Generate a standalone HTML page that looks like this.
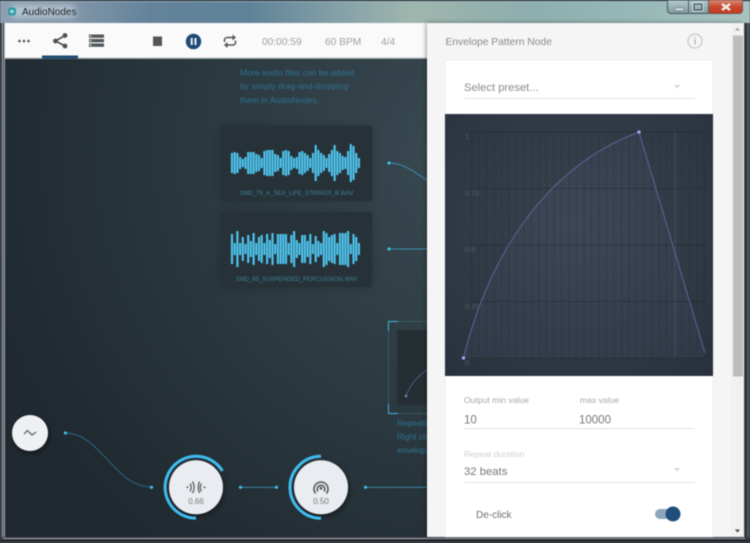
<!DOCTYPE html>
<html>
<head>
<meta charset="utf-8">
<style>
html,body{margin:0;padding:0;width:750px;height:543px;overflow:hidden;background:#2a363d}
svg{display:block;position:absolute;left:0;top:0;filter:blur(.4px)}
text{font-family:"Liberation Sans",sans-serif}
</style>
</head>
<body>
<svg width="750" height="543" viewBox="0 0 750 543" xmlns="http://www.w3.org/2000/svg">
<defs>
<linearGradient id="title" x1="0" x2="1" y1="0" y2="0">
<stop offset="0" stop-color="#8d9fb1"/>
<stop offset=".1" stop-color="#8196a9"/>
<stop offset=".2" stop-color="#64839a"/>
<stop offset=".33" stop-color="#5f8298"/>
<stop offset=".45" stop-color="#84a0a8"/>
<stop offset=".55" stop-color="#9fb6ae"/>
<stop offset=".7" stop-color="#8eaead"/>
<stop offset=".85" stop-color="#97b8b6"/>
<stop offset="1" stop-color="#a9c3c0"/>
</linearGradient>
<radialGradient id="canvas" gradientUnits="userSpaceOnUse" cx="480" cy="150" r="520">
<stop offset="0" stop-color="#3b4b53"/>
<stop offset=".5" stop-color="#2c3a41"/>
<stop offset="1" stop-color="#1f292f"/>
</radialGradient>
<radialGradient id="graph" cx=".5" cy=".42" r=".75">
<stop offset="0" stop-color="#3a4350"/>
<stop offset="1" stop-color="#29323c"/>
</radialGradient>
<linearGradient id="closeb" x1="0" x2="0" y1="0" y2="1">
<stop offset="0" stop-color="#d98a78"/>
<stop offset=".5" stop-color="#c8482f"/>
<stop offset="1" stop-color="#bd3c26"/>
</linearGradient>
<linearGradient id="glassb" x1="0" x2="0" y1="0" y2="1">
<stop offset="0" stop-color="#b4cbcb"/>
<stop offset="1" stop-color="#7f9ca0"/>
</linearGradient>
<filter id="sh" x="-30%" y="-30%" width="160%" height="160%"><feDropShadow dx="1" dy="2" stdDeviation="3" flood-color="#000" flood-opacity=".5"/></filter>
<filter id="sh2" x="-20%" y="-20%" width="140%" height="140%"><feDropShadow dx="0" dy="0" stdDeviation="5" flood-color="#000" flood-opacity=".22"/></filter>
<filter id="pshadow" x="-5%" y="-5%" width="110%" height="110%"><feDropShadow dx="-1" dy="0" stdDeviation="2" flood-color="#000" flood-opacity=".4"/></filter>
<filter id="glow" x="-30%" y="-80%" width="160%" height="260%"><feGaussianBlur stdDeviation="3"/></filter>
<path id="w1" fill="none" d="M232 153v20M234.700 152v22M237.400 153v20M240.100 157v12M242.800 159v8M245.500 157v12M248.200 152v22M250.900 152v22M253.600 152v22M256.300 154v18M259 155v16M261.700 158v10M264.400 151v24M267.100 150v26M269.800 150v26M272.500 150v26M275.200 154v18M277.900 155v16M280.600 158v10M283.300 151v24M286 150v26M288.700 151v24M291.400 156v14M294.100 158v10M296.800 157v12M299.500 152v22M302.200 151v24M304.900 153v20M307.600 155v16M310.300 158v10M313 153v20M315.700 145v36M318.400 150v26M321.100 153v20M323.800 155v16M326.500 158v10M329.200 154v18M331.900 150v26M334.600 145v36M337.300 151v24M340 153v20M342.700 156v14M345.400 157v12M348.100 151v24M350.800 144v38M353.500 146v34M356.200 153v20M358.900 158v10"/>
<path id="w2" fill="none" d="M232 234v30M234.700 243v12M237.400 231v36M240.100 243v12M242.800 237v24M245.500 244v10M248.200 235v28M250.900 241v16M253.600 233v32M256.300 243v12M259 237v24M261.700 235v28M264.400 243v12M267.100 234v30M269.800 240v18M272.500 233v32M275.200 244v10M277.900 234v30M280.600 234v30M283.300 234v30M286 234v30M288.700 243v12M291.400 235v28M294.100 231v36M296.800 240v18M299.500 243v12M302.200 235v28M304.900 235v28M307.600 241v16M310.300 234v30M313 244v10M315.700 236v26M318.400 241v16M321.100 243v12M323.800 231v36M326.500 233v32M329.200 237v24M331.900 235v28M334.600 234v30M337.300 243v12M340 233v32M342.700 233v32M345.400 233v32M348.100 231v36M350.800 244v10M353.500 234v30M356.200 237v24M358.900 243v12"/>
</defs>

<!-- window frame -->
<rect width="750" height="543" fill="#5e7482"/>
<rect y="0" width="750" height="23" fill="url(#title)"/>
<rect y="0" width="750" height="1.200" fill="#3d4a52"/>
<rect y="1.200" width="750" height="1" fill="#b8c8cf" opacity=".5"/>
<rect x="0" y="23" width="5" height="520" fill="#3b3f48"/>
<rect x="744" y="23" width="6" height="520" fill="#4a5258"/>
<rect x="745.500" y="23" width="1" height="520" fill="#1d2226"/>
<rect x="2" y="23" width="1" height="514" fill="#a6a9b2"/>
<rect x="4" y="23" width="1" height="514" fill="#ccd0d6" opacity=".8"/>
<rect y="537" width="750" height="6" fill="#3a3d45"/>
<rect y="538" x="3" width="742" height="1" fill="#a5a8b0"/>
<rect y="540" x="0" width="750" height="1" fill="#15181b"/>

<!-- title -->
<rect x="10" y="5" width="66" height="13" rx="6" fill="#d5e2ea" opacity=".55" filter="url(#glow)"/>
<rect x="8" y="7.500" width="8" height="8" rx="2.500" fill="#2f9aa5"/>
<circle cx="12" cy="11.500" r="1.800" fill="#a8dde0"/>
<text x="22" y="15" font-size="10" fill="#1c2428">AudioNodes</text>

<!-- window buttons -->
<path d="M667.500 0V10a3.500 3.500 0 0 0 3.500 3.500H739a3.500 3.500 0 0 0 3.500-3.500V0Z" fill="url(#glassb)" stroke="#46565e"/>
<path d="M709 0V13.500H739a3.500 3.500 0 0 0 3.500-3.500V0Z" fill="url(#closeb)"/>
<rect x="688" y="0" width="1" height="14" fill="#50636a"/>
<rect x="708" y="0" width="1" height="14" fill="#50636a"/>
<rect x="675" y="8" width="9" height="2.500" fill="#e8eef0" stroke="#566a72" stroke-width=".6"/>
<rect x="694" y="4" width="8" height="6" fill="none" stroke="#2f4048" stroke-width="1"/>
<rect x="693" y="3" width="10" height="8" fill="none" stroke="#e6eeee" stroke-width=".8"/>
<path d="M722 4L730 10M730 4L722 10" stroke="#f3ece8" stroke-width="2.400"/>

<!-- canvas -->
<rect x="5" y="59" width="425" height="478" fill="url(#canvas)"/>

<!-- toolbar -->
<rect x="5" y="23" width="424" height="35" fill="#fafafa"/>
<rect x="5" y="57.500" width="424" height="1.200" fill="#b8bdbf"/>
<rect x="42" y="55.500" width="36" height="3.200" fill="#1f4a6f"/>
<circle cx="19.500" cy="41" r="1.300" fill="#555"/><circle cx="24" cy="41" r="1.300" fill="#555"/><circle cx="28.500" cy="41" r="1.300" fill="#555"/>
<path d="M65 35.500L55.500 41L65 46" fill="none" stroke="#4b5257" stroke-width="1.600"/>
<circle cx="65" cy="35.500" r="2.400" fill="#4b5257"/><circle cx="55.500" cy="41" r="2.400" fill="#4b5257"/><circle cx="65" cy="46" r="2.400" fill="#4b5257"/>
<rect x="89" y="34.500" width="15" height="3.300" fill="#50565a"/><rect x="89" y="39" width="15" height="3.300" fill="#50565a"/><rect x="89" y="43.500" width="15" height="3.300" fill="#50565a"/>
<rect x="90" y="35.500" width="1.400" height="1.200" fill="#fff"/><rect x="90" y="40" width="1.400" height="1.200" fill="#fff"/><rect x="90" y="44.500" width="1.400" height="1.200" fill="#fff"/>
<rect x="153" y="36.500" width="9" height="9.500" fill="#555"/>
<circle cx="193.500" cy="41.500" r="7.700" fill="#1f4a73"/>
<rect x="190.700" y="38" width="2" height="7" fill="#eef"/><rect x="194.500" y="38" width="2" height="7" fill="#eef"/>
<path d="M234 37.500H227a2.500 2.500 0 0 0-2.500 2.500V42M226 45H233a2.500 2.500 0 0 0 2.500-2.500V40.500" fill="none" stroke="#555" stroke-width="1.500"/>
<path d="M232.500 34.500L236 37.500L232.500 40.500ZM227.500 42L224 45L227.500 48Z" fill="#555"/>
<text x="262" y="45" font-size="10.200" fill="#a0a0a0">00:00:59</text>
<text x="325" y="45" font-size="10.200" fill="#a0a0a0">60 BPM</text>
<text x="381" y="45" font-size="10.200" fill="#a0a0a0">4/4</text>

<!-- help text -->
<text x="240" y="75.500" font-size="8.550" fill="#2c7290">More audio files can be added</text>
<text x="240" y="89" font-size="8.550" fill="#2c7290">by simply drag-and-dropping</text>
<text x="240" y="103" font-size="8.550" fill="#2c7290">them in AudioNodes.</text>

<!-- wave cards -->
<rect x="221" y="126" width="151" height="75" fill="#263238" filter="url(#sh2)"/>
<rect x="221" y="212" width="151" height="75" fill="#263238" filter="url(#sh2)"/>
<use href="#w1" stroke="#3f9fc4" stroke-width="2.400"/>
<use href="#w1" stroke="#5ad2fa" stroke-width="1.100"/>
<use href="#w2" stroke="#3f9fc4" stroke-width="2.400"/>
<use href="#w2" stroke="#5ad2fa" stroke-width="1.100"/>
<text x="296.500" y="195" font-size="6" fill="#3f7f93" text-anchor="middle">SMD_75_A_SEA_LIFE_STRINGS_B.WAV</text>
<text x="296.500" y="281" font-size="6" fill="#3f7f93" text-anchor="middle">SMD_65_SUSPENDED_PERCUSSION.WAV</text>

<!-- wires -->
<g fill="none" stroke="#3d8fb0" stroke-width=".9">
<path d="M389 163C405 163 415 173 428 181"/>
<path d="M389 249H428"/>
<path stroke="#2a6d89" d="M65.500 433C100 433 115 487 151 487"/>
<path d="M240 487.300H276"/>
<path d="M365 487.300H428"/>
</g>
<g fill="#3fbde8">
<circle cx="389" cy="163" r="1.600"/><circle cx="389" cy="249" r="1.600"/>
<circle cx="65.500" cy="433" r="1.600"/><circle cx="151.500" cy="487.300" r="1.600"/>
<circle cx="240.500" cy="487.300" r="1.600"/><circle cx="276.500" cy="487.300" r="1.600"/>
<circle cx="365.500" cy="487.300" r="1.600"/>
</g>

<!-- envelope thumbnail -->
<rect x="388.500" y="321.500" width="45" height="92" fill="none" stroke="#3c5560" stroke-width="1"/>
<path d="M398 321.500H388.500V331M388.500 404V413.500H398" fill="none" stroke="#3f9fc2" stroke-width="1.200"/>
<rect x="397" y="330" width="36" height="75" fill="#252e33"/>
<path d="M406 396C410 385 418 375 430 368" fill="none" stroke="#525a86" stroke-width="1"/>
<circle cx="406" cy="396" r="1.200" fill="#8f8fe0"/>
<text x="397" y="426" font-size="8.400" fill="#2c7290">Repeating</text>
<text x="397" y="439.500" font-size="8.400" fill="#2c7290">Right click</text>
<text x="397" y="453" font-size="8.400" fill="#2c7290">envelope</text>

<!-- circle nodes -->
<circle cx="30" cy="433" r="18" fill="#eef0f3" filter="url(#sh)"/>
<path d="M24 434L27.500 430.500L32 435L36 432" fill="none" stroke="#666" stroke-width="1.300"/>

<circle cx="196" cy="487.300" r="27" fill="#e9ecf0" filter="url(#sh)"/>
<path d="M222.400 470.900A31 31 0 1 0 196 518.300" fill="none" stroke="#3fbdf0" stroke-width="3"/>
<g fill="none" stroke="#5e5e5e" stroke-width="1.300">
<path d="M190 483.500Q192.500 487.300 190 491.500"/>
<path d="M192.500 481.500Q196 487.300 192.500 493"/>
<path d="M201.500 483.500Q199 487.300 201.500 491.500"/>
<path d="M199 481.500Q196.500 487.300 199 493" transform="translate(.5 0)"/>
</g>
<circle cx="187.500" cy="487.300" r="1" fill="#5e5e5e"/><circle cx="204.500" cy="487.300" r="1" fill="#5e5e5e"/>
<text x="196" y="504" font-size="8" fill="#777" text-anchor="middle">0.66</text>

<circle cx="321" cy="487.300" r="27" fill="#e9ecf0" filter="url(#sh)"/>
<path d="M321 456.300A31 31 0 0 0 321 518.300" fill="none" stroke="#3fbdf0" stroke-width="3"/>
<g fill="none" stroke="#5e5e5e" stroke-width="1.700">
<path d="M315.600 493.500A7 7 0 1 1 326.400 493.500"/>
<path d="M318 491.500A3.800 3.800 0 1 1 324 491.500"/>
</g>
<circle cx="321" cy="488.300" r="1.400" fill="#5e5e5e"/>
<text x="321" y="504" font-size="8" fill="#777" text-anchor="middle">0.50</text>

<!-- side panel -->
<rect x="427" y="23" width="317" height="514" fill="#f5f5f5" filter="url(#pshadow)"/>
<rect x="731" y="23" width="12.500" height="514" fill="#f1f1f1"/>
<path d="M737.500 27.500L740 30.500H735Z" fill="#a5a5a5"/>
<rect x="733" y="35.500" width="10" height="341" fill="#bdbdbd"/>
<path d="M737.500 532.500L740 529.500H735Z" fill="#444"/>
<text x="445.500" y="45" font-size="10.300" fill="#8a8a8a">Envelope Pattern Node</text>
<circle cx="695" cy="41" r="7" fill="none" stroke="#bcbcbc" stroke-width="1"/>
<rect x="694.400" y="39.500" width="1.200" height="5" fill="#aaa"/><rect x="694.400" y="37" width="1.200" height="1.300" fill="#aaa"/>

<!-- card -->
<rect x="445" y="60" width="268" height="477" fill="#fff" stroke="#e6e6e6" stroke-width=".6"/>
<text x="464" y="91" font-size="11.200" fill="#8b8b8b">Select preset...</text>
<rect x="464" y="98" width="231" height="1" fill="#e2e2e2"/>
<path d="M673.500 85L680.500 85L677 88.500Z" fill="#d8d8d8"/>

<!-- graph -->
<rect x="445" y="114" width="268" height="262" fill="url(#graph)"/>
<path d="M463.500 358C490 250 550 165 639 132L705 353V358Z" fill="#5c6688" opacity=".14"/>
<g stroke="#242c34" stroke-width=".7" opacity=".5">
<path d="M471.700 132V358M479 132V358M486.500 132V358M494 132V358M501.500 132V358M509 132V358M516.500 132V358M524 132V358M531.500 132V358M539 132V358M546.500 132V358M554 132V358M561.500 132V358M569 132V358M576.500 132V358M584 132V358M591.500 132V358M599 132V358M606.500 132V358M614 132V358M621.500 132V358M629 132V358M636.500 132V358M644 132V358M651.500 132V358M659 132V358M666.500 132V358M682 132V358M689.500 132V358M697 132V358M704.500 132V358"/>
</g>
<rect x="674.500" y="132" width="1.500" height="226" fill="#465062" opacity=".6"/>
<g stroke="#1f262c" stroke-width=".8" opacity=".65">
<path d="M471.700 132H705M471.700 188.500H705M471.700 245H705M471.700 301.500H705M471.700 358H705"/>
</g>
<path d="M463.500 358C490 250 550 165 639 132L705 353" fill="none" stroke="#5f6498" stroke-width="1"/>
<rect x="462" y="356.500" width="3" height="3" fill="#a6a6f5"/>
<rect x="637.500" y="130.500" width="3" height="3" fill="#a6a6f5"/>
<g font-size="7.500" fill="#535d67">
<text x="465" y="139">1</text>
<text x="465" y="196">0.75</text>
<text x="465" y="252">0.5</text>
<text x="465" y="309">0.25</text>
<text x="465" y="365">0</text>
</g>

<!-- fields -->
<text x="464" y="403" font-size="8.600" fill="#a8a8a8">Output min value</text>
<text x="580" y="403" font-size="8.600" fill="#a8a8a8">max value</text>
<text x="464" y="423.500" font-size="11.500" fill="#777">10</text>
<text x="579" y="423.500" font-size="11.500" fill="#777">10000</text>
<rect x="464" y="428" width="231" height="1" fill="#e2e2e2"/>
<text x="464" y="457" font-size="8.500" fill="#cfcfcf">Repeat duration</text>
<text x="464" y="475" font-size="11.300" fill="#777">32 beats</text>
<rect x="464" y="482" width="231" height="1" fill="#e2e2e2"/>
<path d="M673.500 468L680.500 468L677 471.500Z" fill="#d8d8d8"/>
<text x="476" y="518" font-size="10" fill="#6e6e6e">De-click</text>
<rect x="655" y="509" width="20" height="10" rx="5" fill="#8fa5bb"/>
<circle cx="673" cy="514" r="7.500" fill="#1f4e79"/>
</svg>
</body>
</html>
